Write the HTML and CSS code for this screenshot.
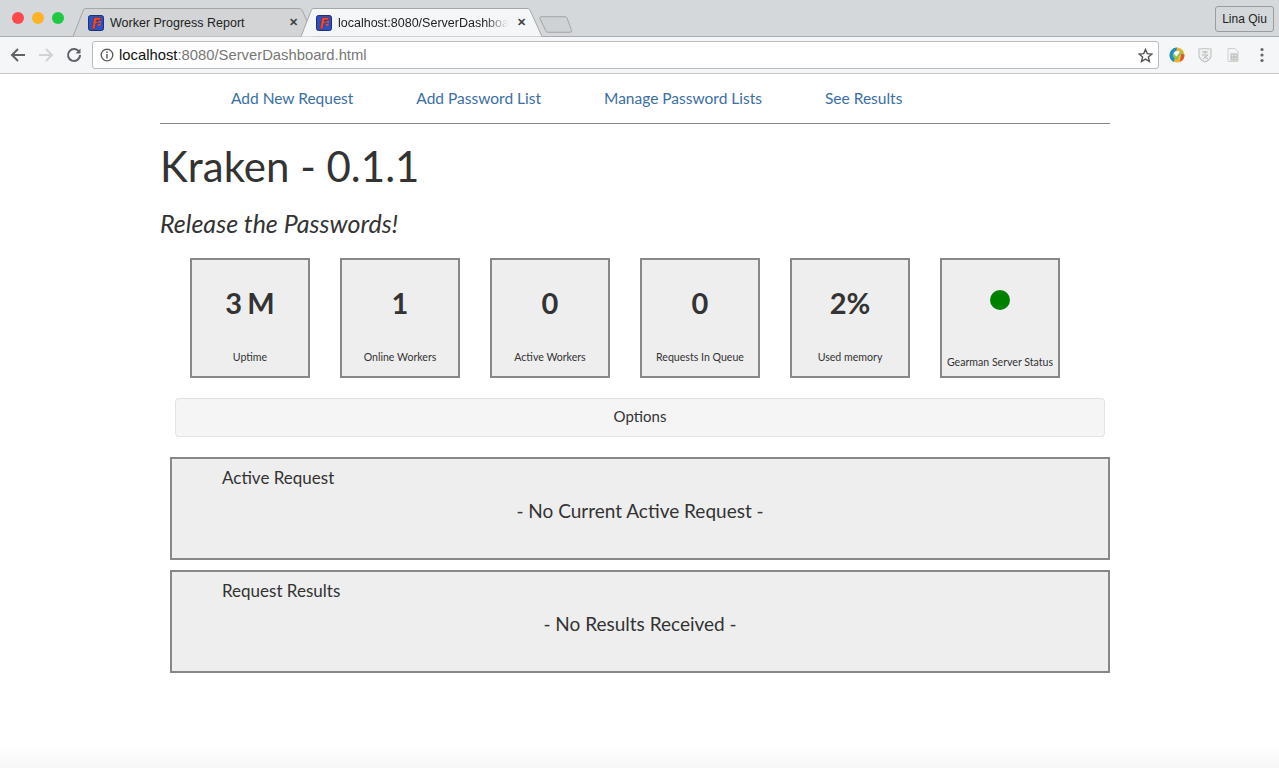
FILE: index.html
```html
<!DOCTYPE html>
<html lang="en">
<head>
<meta charset="utf-8">
<title>Kraken</title>
<link rel="stylesheet" href="styles.css">
</head>
<body>
<div class="window">
  <header class="tabstrip">
    <div class="lights"><i class="light red"></i><i class="light yellow"></i><i class="light green"></i></div>
    <div class="tabs">
      <div class="tab inactive">
        <svg class="tab-shape" viewBox="0 0 241 29"><path d="M0 28.500 L10.500 1.800 Q11 .5 13 .5 H226 Q228 .5 229 2 L241 28.500" fill="#d2d4d6" stroke="#a4a6a8"/></svg>
        <svg class="favicon" viewBox="0 0 16 16"><rect x=".5" y=".5" width="15" height="15" rx="2" fill="#2a52c4" stroke="#1c2f78"/><path d="M4 14 L6 2.500 H13 L12.400 5 H8.500 L8.200 6.500 H10 L9.600 8.500 H7.800 L6.800 14Z" fill="#ef4b2a" stroke="#7a1f10" stroke-width=".5"/><path d="M10.500 6.900 H13 M10 9.900 H12.500" stroke="#ef4b2a" stroke-width="1.600"/></svg>
        <span class="tab-title">Worker Progress Report</span>
        <span class="tab-close">✕</span>
      </div>
      <div class="tab active">
        <svg class="tab-shape" viewBox="0 0 241 29"><path d="M0 28.500 L10.500 1.800 Q11 .5 13 .5 H226 Q228 .5 229 2 L241 28.500" fill="#f5f6f7" stroke="#a4a6a8"/></svg>
        <svg class="favicon" viewBox="0 0 16 16"><rect x=".5" y=".5" width="15" height="15" rx="2" fill="#2a52c4" stroke="#1c2f78"/><path d="M4 14 L6 2.500 H13 L12.400 5 H8.500 L8.200 6.500 H10 L9.600 8.500 H7.800 L6.800 14Z" fill="#ef4b2a" stroke="#7a1f10" stroke-width=".5"/><path d="M10.500 6.900 H13 M10 9.900 H12.500" stroke="#ef4b2a" stroke-width="1.600"/></svg>
        <span class="tab-title fade">localhost:8080/ServerDashboard.html</span>
        <span class="tab-close">✕</span>
      </div>
      <svg class="newtab" viewBox="0 0 34 17"><path d="M1 2.500 Q.5 .5 2.500 .5 H27 Q28.500 .5 29 2 L33.500 14.500 Q34 16.500 32 16.500 H9 Q7.500 16.500 7 15 Z" fill="#cfd2d4" stroke="#a0a2a4"/></svg>
    </div>
    <div class="profile">Lina Qiu</div>
  </header>
  <div class="toolbar">
    <svg class="nav-icon" viewBox="0 0 16 16"><path d="M15 8 H2 M8 2 L2 8 L8 14" fill="none" stroke="#5f6368" stroke-width="2"/></svg>
    <svg class="nav-icon" viewBox="0 0 16 16"><path d="M1 8 H14 M8 2 L14 8 L8 14" fill="none" stroke="#d0d2d4" stroke-width="2"/></svg>
    <svg class="nav-icon" viewBox="0 0 16 16"><path d="M13.300 5.200 A6 6 0 1 0 14 8" fill="none" stroke="#5f6368" stroke-width="2"/><path d="M14.500 1.500 V6.500 H9.500Z" fill="#5f6368"/></svg>
    <div class="omnibox">
      <svg class="info" viewBox="0 0 14 14"><circle cx="7" cy="7" r="5.800" fill="none" stroke="#555" stroke-width="1.300"/><path d="M7 6 V10.500 M7 3.500 V5" stroke="#555" stroke-width="1.400"/></svg>
      <span class="url"><b>localhost</b>:8080/ServerDashboard.html</span>
      <svg class="star" viewBox="0 0 16 16"><path d="M8 1.500 L9.900 6 L14.800 6.400 L11.100 9.600 L12.200 14.400 L8 11.900 L3.800 14.400 L4.900 9.600 L1.200 6.400 L6.100 6Z" fill="none" stroke="#555" stroke-width="1.500"/></svg>
    </div>
    <div class="extensions">
      <svg class="ext" viewBox="0 0 16 16"><circle cx="8" cy="8" r="7.500" fill="#f2b632"/><path d="M8 .5 A7.500 7.500 0 0 0 .5 8 A7.500 7.500 0 0 0 5 15 Z" fill="#1f8fc4"/><path d="M11 14.800 A7.500 7.500 0 0 0 15.500 8 L12 6Z" fill="#e2562f"/><circle cx="8" cy="7.500" r="3.500" fill="#fff"/><path d="M4.500 8 L7.500 11.500 L13 4.500" fill="none" stroke="#8fc641" stroke-width="2.500"/></svg>
      <svg class="ext" viewBox="0 0 16 16"><path d="M2 2 Q8 1 14 2 V9 Q13 13 8 15 Q3 13 2 9Z" fill="#f0f1f1" stroke="#c4c6c6" stroke-width="1.200"/><path d="M5 5 H11 M8 3.500 V7 M5 8 H11 L6 12 M7 9.500 L11 12" fill="none" stroke="#b8baba"/></svg>
      <svg class="ext" viewBox="0 0 16 16"><path d="M3 1.500 H10 L13 4.500 V14.500 H3Z" fill="#f4f4f4" stroke="#cfd1d1"/><rect x="6" y="7" width="6" height="6" fill="#e6e8e6" stroke="#b4b8b4"/><path d="M9 7 V13 M6 10 H12" stroke="#b4b8b4"/></svg>
      <svg class="ext menu" viewBox="0 0 4 16"><circle cx="2" cy="2.500" r="1.600"/><circle cx="2" cy="8" r="1.600"/><circle cx="2" cy="13.500" r="1.600"/></svg>
    </div>
  </div>

  <main class="page">
    <nav class="nav">
      <a href="#">Add New Request</a>
      <a href="#">Add Password List</a>
      <a href="#">Manage Password Lists</a>
      <a href="#">See Results</a>
    </nav>
    <h1 class="title">Kraken - 0.1.1</h1>
    <p class="tagline">Release the Passwords!</p>
    <section class="tiles">
      <div class="tile"><div class="tile-value">3 M</div><div class="tile-label">Uptime</div></div>
      <div class="tile"><div class="tile-value">1</div><div class="tile-label">Online Workers</div></div>
      <div class="tile"><div class="tile-value">0</div><div class="tile-label">Active Workers</div></div>
      <div class="tile"><div class="tile-value">0</div><div class="tile-label">Requests In Queue</div></div>
      <div class="tile"><div class="tile-value">2%</div><div class="tile-label">Used memory</div></div>
      <div class="tile tile-status"><i class="status-dot"></i><div class="tile-label">Gearman Server Status</div></div>
    </section>
    <div class="options">Options</div>
    <section class="panel">
      <h2 class="panel-title">Active Request</h2>
      <p class="panel-empty">- No Current Active Request -</p>
    </section>
    <section class="panel">
      <h2 class="panel-title">Request Results</h2>
      <p class="panel-empty">- No Results Received -</p>
    </section>
  </main>
  <div class="bottom-fade"></div>
</div>
</body>
</html>
```
FILE: styles.css
```css
* { box-sizing: border-box; }
html, body { margin: 0; padding: 0; }
body {
  font-family: "Lato", "Noto Sans", sans-serif;
  color: #333;
  background: #fff;
}
.window { height: 768px; overflow: hidden; display: flex; flex-direction: column; }

.tabstrip {
  height: 37px;
  flex: none;
  background: #d5d8da;
  display: flex;
  align-items: flex-start;
  border-bottom: 1px solid #a9abad;
  font-family: "Liberation Sans", sans-serif;
}
.lights { display: flex; gap: 8px; padding: 12px 0 0 12px; width: 73px; flex: none; }
.light { width: 12px; height: 12px; border-radius: 50%; display: block; }
.red { background: #fc4a4c; }
.yellow { background: #fdb325; }
.green { background: #1fc944; }
.tabs { display: flex; align-items: flex-start; padding-top: 8px; flex: 1; height: 37px; }
.tab {
  position: relative;
  width: 229px;
  height: 29px;
  margin-right: -1px;
  display: flex;
  align-items: center;
  padding: 0 2px 0 15px;
  font-size: 12.5px;
  color: #222;
  flex: none;
}
.tab.active { z-index: 1; }
.tab-shape { position: absolute; left: 0; top: 0; width: 241px; height: 29px; overflow: visible; }
.favicon { position: relative; width: 16px; height: 16px; flex: none; margin-right: 6px; }
.tab-title { position: relative; flex: 1; min-width: 0; white-space: nowrap; overflow: hidden; }
.tab-title.fade {
  -webkit-mask-image: linear-gradient(to right, #000 85%, transparent 99%);
  mask-image: linear-gradient(to right, #000 85%, transparent 99%);
}
.tab-close { position: relative; flex: none; width: 14px; font-size: 11px; font-weight: 700; color: #444; margin-left: 4px; text-align: center; }
.newtab { width: 33px; height: 17px; margin: 8px 0 0 10px; flex: none; }
.profile {
  flex: none;
  margin: 6px 5px 0 0;
  width: 59px;
  height: 26px;
  border: 1px solid #9a9c9e;
  border-radius: 3px;
  font-size: 12px;
  line-height: 24px;
  text-align: center;
  color: #222;
}

.toolbar {
  height: 37px;
  flex: none;
  background: #f5f6f7;
  border-bottom: 1px solid #c4c6c8;
  display: flex;
  align-items: center;
  padding: 0 11px 0 10px;
  font-family: "Liberation Sans", sans-serif;
}
.nav-icon { width: 16px; height: 16px; flex: none; margin-right: 12px; }
.nav-icon + .nav-icon + .nav-icon { margin-right: 10px; }
.omnibox {
  width: 1067px;
  height: 28px;
  flex: none;
  background: #fff;
  border: 1px solid #b9bbbd;
  border-radius: 3px;
  display: flex;
  align-items: center;
  padding: 0 5px 0 7px;
}
.info { width: 14px; height: 14px; flex: none; margin-right: 5px; }
.url { flex: 1; font-size: 14.8px; color: #777; }
.url b { font-weight: 400; color: #111; }
.star { width: 15px; height: 15px; flex: none; }
.extensions { display: flex; align-items: center; gap: 12px; margin-left: 10px; }
.ext { width: 16px; height: 16px; flex: none; }
.ext.menu { width: 4px; margin-left: 7px; fill: #666; }

.page { width: 950px; margin-left: 160px; flex: none; }
.nav {
  height: 50px;
  border-bottom: 1px solid #888;
  display: flex;
  gap: 63px;
  padding: 14px 0 0 71px;
  font-size: 15.5px;
  line-height: 20px;
}
.nav a { color: #3a6ea5; text-decoration: none; }
.title { font-size: 42px; font-weight: 400; line-height: 52px; margin: 16px 0 0; color: #333; }
.tagline { font-size: 25px; font-style: italic; line-height: 30px; margin: 16px 0 0; color: #333; }
.tiles { display: flex; gap: 30px; padding-left: 30px; margin-top: 20px; }
.tile {
  width: 120px;
  height: 120px;
  background: #eee;
  border: 2px solid #888;
  text-align: center;
  display: flex;
  flex-direction: column;
  align-items: center;
}
.tile-value { font-size: 29px; font-weight: 700; line-height: 36px; margin-top: 25px; word-spacing: -2px; color: #333; }
.tile-label { font-size: 10.6px; line-height: 14px; margin-top: auto; margin-bottom: 12px; white-space: nowrap; }
.status-dot { width: 20px; height: 20px; border-radius: 50%; background: #008000; margin-top: 30px; display: block; }
.tile-status .tile-label { margin-bottom: 7px; }
.options {
  width: 930px;
  height: 39px;
  margin: 20px 0 20px 15px;
  background: #f5f5f5;
  border: 1px solid #e3e3e3;
  border-radius: 4px;
  text-align: center;
  font-size: 15px;
  line-height: 35px;
}
.panel {
  width: 940px;
  height: 103px;
  margin: 0 0 10px 10px;
  background: #eee;
  border: 2px solid #888;
  padding: 9px 0 0 50px;
}
.panel-title { font-size: 17px; font-weight: 400; line-height: 20px; margin: 0; }
.panel-empty { font-size: 19px; line-height: 24px; margin: 11px 0 0 -50px; text-align: center; }
.bottom-fade { height: 23px; margin-top: auto; background: linear-gradient(#fff, #f7f7f7); flex: none; }
```
